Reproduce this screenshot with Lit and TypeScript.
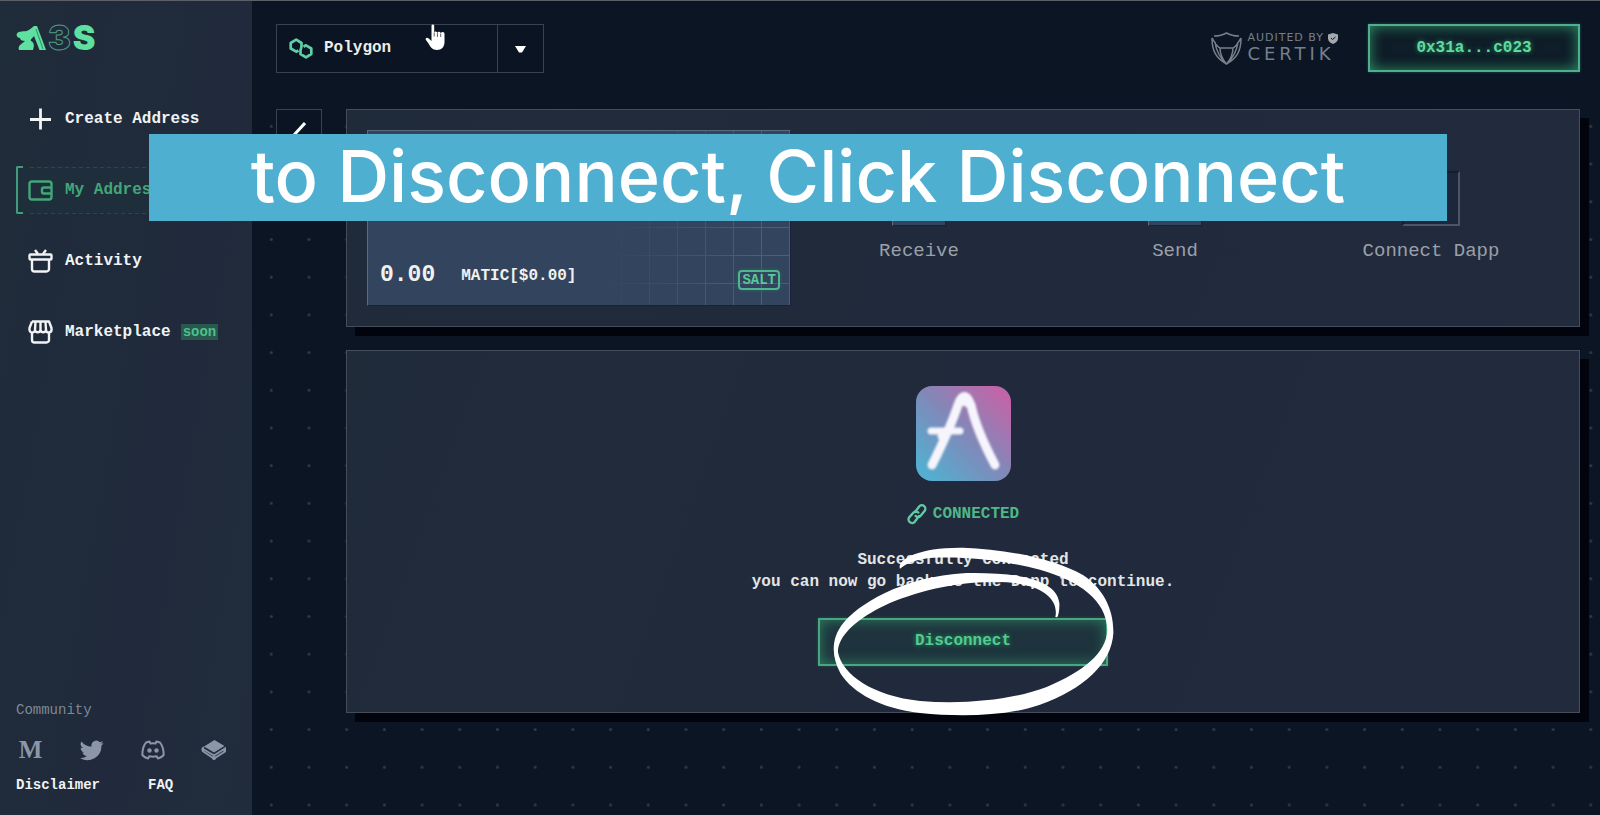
import { LitElement, html, css, svg } from "lit";
import { customElement, property } from "lit/decorators.js";
import { classMap } from "lit/directives/class-map.js";

const icons: Record<string, unknown> = {
  plus: svg`<path d="M12.500 1.500v21M2 12.500h21" stroke-width="2.800"/>`,
  wallet: svg`<rect x="1.500" y="3.500" width="22" height="18" rx="2.500"/><path d="M23.500 9.500H16a2 2 0 0 0-2 2v2a2 2 0 0 0 2 2h7.500"/>`,
  gift: svg`<rect x="1.500" y="5.500" width="22" height="5" rx="1"/><path d="M4 10.500V20a2.500 2.500 0 0 0 2.500 2.500h12A2.500 2.500 0 0 0 21 20v-9.500M7 1 10 5M18 1 15 5"/>`,
  store: svg`<path d="M4 1.500h17L23.500 8v1.500a2.700 2.700 0 0 1-5.500.5l-.5-8.500M18 10a2.800 2.800 0 0 1-5.500 0A2.800 2.800 0 0 1 7 10l.5-8.500M7 10A2.700 2.700 0 0 1 1.500 9.500V8L4 1.500M12.500 1.500V10M4 13v7a2.500 2.500 0 0 0 2.500 2.500h12A2.500 2.500 0 0 0 21 20v-7"/>`,
};

interface NavEntry {
  icon: string;
  label: string;
  tag?: string;
  active?: boolean;
}

const navEntries: NavEntry[] = [
  { icon: "plus", label: "Create Address" },
  { icon: "wallet", label: "My Address", active: true },
  { icon: "gift", label: "Activity" },
  { icon: "store", label: "Marketplace", tag: "soon" },
];

@customElement("side-bar")
export class SideBar extends LitElement {
  @property({ attribute: false }) entries: NavEntry[] = navEntries;

  static styles = css`
    :host {
      box-sizing: border-box;
      display: flex;
      flex-direction: column;
      padding: 22px 16px 21px;
      background: linear-gradient(100deg, #1f2c39, #202a3c 60%, #212c3b);
      color: #f1f3f4;
    }
    a { color: inherit; text-decoration: none; }
    .logo {
      display: flex;
      align-items: center;
      gap: 2px;
      height: 30px;
      font: 900 34px/30px Inter, sans-serif;
      color: #5fe0a0;
    }
    .mark { width: 30px; height: 26px; }
    .outline { color: transparent; -webkit-text-stroke: 1px #4f9a85; }
    nav { display: flex; flex-direction: column; gap: 23px; margin-top: 42px; }
    .item {
      position: relative;
      display: flex;
      align-items: center;
      gap: 12px;
      height: 48px;
      padding-left: 12px;
      font-weight: 700;
      white-space: nowrap;
    }
    .item svg {
      width: 25px;
      height: 25px;
      fill: none;
      stroke: currentColor;
      stroke-width: 2.4;
      stroke-linejoin: round;
    }
    .active {
      color: #43a679;
      background:
        repeating-linear-gradient(90deg, #2d4549 0 4px, transparent 4px 7px) 14px 1px / 100% 1px no-repeat,
        repeating-linear-gradient(90deg, #2d4549 0 4px, transparent 4px 7px) 14px 47px / 100% 1px no-repeat,
        #1d323c80;
    }
    .active::before {
      content: "";
      position: absolute;
      inset: 0 auto 0 0;
      width: 5px;
      border: 2px solid #3f9c7c;
      border-right: 0;
      border-radius: 2px 0 0 2px;
    }
    .tag {
      padding: 0 2px;
      margin-left: -2px;
      background: #29584f;
      color: #4cc08a;
      font-size: 14px;
      line-height: 16px;
    }
    footer { margin-top: auto; font-size: 14px; line-height: 18px; }
    .title { color: #7f8997; }
    .social {
      display: grid;
      grid-template-columns: repeat(4, 61px);
      align-items: center;
      height: 30px;
      margin: 16px 0 11px;
      color: #8b96a8;
    }
    .social a { display: flex; justify-content: center; width: 29px; }
    .social svg { width: 26px; height: 24px; fill: currentColor; }
    .social .medium { font: 700 25px/30px "Liberation Serif", serif; }
    .links { display: flex; gap: 48px; font-weight: 700; }
  `;

  render() {
    return html`
      <div class="logo" role="img" aria-label="A3S">
        <svg class="mark" viewBox="0 0 30 26" aria-hidden="true">
          <path d="M1 8.500C3 5.500 8 7 12 5.500c2-1 4-3 6-4.500h3l9 24h-6.500L18 11c-1 2-4 3-3 5 4 2 3 6 2 9H3c-1-2 0-4 1-5l5-4c-3 0-5-1-5-3-3 0-4-3-3-4.500z" fill="#5fe0a0" />
          <path d="M20 4l7 20" stroke="#2f8f66" fill="none" />
        </svg>
        <span class="outline">3</span><span>S</span>
      </div>
      <nav>
        ${this.entries.map(
          (e) => html`<a href="#" class=${classMap({ item: true, active: !!e.active })}>
            <svg viewBox="0 0 25 25" aria-hidden="true">${icons[e.icon]}</svg>
            <span>${e.label}</span>
            ${e.tag ? html`<span class="tag">${e.tag}</span>` : ""}
          </a>`
        )}
      </nav>
      <footer>
        <div class="title">Community</div>
        <div class="social">
          <a href="#" class="medium">M</a>
          <a href="#" aria-label="Twitter">
            <svg viewBox="0 0 24 24"><path d="M23.600 4.900a9.600 9.600 0 0 1-2.800.8 4.900 4.900 0 0 0 2.100-2.700 9.800 9.800 0 0 1-3.100 1.200 4.900 4.900 0 0 0-8.300 4.500A13.900 13.900 0 0 1 1.400 3.600a4.900 4.900 0 0 0 1.500 6.500 4.900 4.900 0 0 1-2.200-.6 4.900 4.900 0 0 0 3.900 4.900 5 5 0 0 1-2.200.1 4.900 4.900 0 0 0 4.600 3.400A9.900 9.900 0 0 1 0 19.900a13.900 13.900 0 0 0 21.400-12.400c.9-.7 1.600-1.600 2.200-2.600z" /></svg>
          </a>
          <a href="#" aria-label="Discord">
            <svg viewBox="0 0 24 24"><path fill="none" stroke="currentColor" stroke-width="2" stroke-linejoin="round" d="M8.500 3.500 5 4.500C3 7 1.300 11.500 1.300 17c1.500 1.800 3.500 3 5.700 3.500l1.300-2.300c2.500.6 4.900.6 7.400 0l1.300 2.300c2.200-.5 4.200-1.700 5.700-3.500 0-5.500-1.700-10-3.700-12.500l-3.500-1-1 2a16 16 0 0 0-5 0z" /><circle cx="8.500" cy="12.500" r="2.200" /><circle cx="15.500" cy="12.500" r="2.200" /></svg>
          </a>
          <a href="#" aria-label="GitBook">
            <svg viewBox="0 0 24 24"><path d="M12.500 2 22.500 8 12 14.500 2 8.500z" /><path fill="none" stroke="currentColor" stroke-width="1.900" d="M2 9C-.5 10.500 0 13 2 14l10 6.500 11-7v-3L12 17.500 1 11" /><circle cx="12" cy="20" r="2" /><circle cx="22.500" cy="12" r="1.500" /></svg>
          </a>
        </div>
        <div class="links"><a href="#">Disclaimer</a><a href="#">FAQ</a></div>
      </footer>
    `;
  }
}

@customElement("top-bar")
export class TopBar extends LitElement {
  static styles = css`
    :host { display: flex; align-items: flex-start; height: 49px; }
    .network {
      position: relative;
      box-sizing: border-box;
      display: flex;
      align-items: center;
      width: 268px;
      height: 49px;
      border: 1px solid #39424f;
      background: #0b1422;
    }
    .network svg { flex: none; }
    .poly { width: 24px; height: 21px; margin-left: 12px; fill: none; stroke: #5fcfa5; stroke-width: 2.7; stroke-linejoin: round; }
    select {
      flex: 1;
      align-self: stretch;
      min-width: 0;
      padding: 0 0 2px 11px;
      border: 0;
      background: none;
      color: #eceee9;
      font: 700 16px "Liberation Mono", monospace;
      appearance: none;
    }
    .caret {
      display: flex;
      align-items: center;
      justify-content: center;
      align-self: stretch;
      width: 46px;
      padding-top: 2px;
      box-sizing: border-box;
      border-left: 1px solid #39424f;
    }
    .caret svg { width: 11px; height: 7px; fill: #fff; }
    .cursor { position: absolute; left: 148px; top: -1px; width: 22px; height: 28px; }
    .audit {
      display: flex;
      align-items: center;
      gap: 5px;
      height: 48px;
      margin-left: auto;
      margin-right: 30px;
      color: #777f8a;
      font-family: "DejaVu Sans", sans-serif;
    }
    .shield { width: 31px; height: 33px; fill: none; stroke: currentColor; stroke-width: 1.5; }
    .by { display: flex; align-items: center; gap: 4px; font-size: 11px; line-height: 12px; letter-spacing: 1px; }
    .by svg { width: 10px; height: 11px; fill: #a3a8af; }
    .name { font-size: 18px; line-height: 20px; letter-spacing: 4px; }
    .wallet {
      width: 212px;
      height: 48px;
      padding: 0;
      border: 2px solid #4fae8d;
      background: #0e1d28;
      box-shadow: inset 0 0 14px #2f8f66, 0 0 3px #17553f;
      color: #5fdc9d;
      font: 700 16px "Liberation Mono", monospace;
      text-shadow: 0 0 5px #2b9a64;
    }
  `;

  render() {
    return html`
      <label class="network">
        <svg class="poly" viewBox="0 0 24 21" aria-hidden="true">
          <path d="M9.500 12.500 7.200 13.700 1.700 10.500V5L7.200 1.700 12.500 5v3.500L11.500 12.500V16L17 19.300 22.300 16V10.500L17 7.300 14.500 8.700" />
        </svg>
        <select aria-label="Network"><option>Polygon</option></select>
        <span class="caret"><svg viewBox="0 0 11 7"><path d="M0 0h11L7 6.500H4z" /></svg></span>
        <svg class="cursor" viewBox="0 0 22 28" aria-hidden="true">
          <path d="M6.500 1.500a1.400 1.400 0 0 1 2.700 0V8.500a1.700 1.700 0 0 1 3.200.4 1.700 1.700 0 0 1 3.300.6 1.700 1.700 0 0 1 3.800.8V18c0 5-3 8-7.500 8-5 0-6.500-3-8.500-6.500L.8 15.800c-.8-1.900 1.500-3 2.900-1.300L6.500 17z" fill="#fff" />
          <path d="M9.200 8.500v4M12.400 9V13M15.700 9.700V13" stroke="#59606b" stroke-width="1" />
        </svg>
      </label>
      <div class="audit">
        <svg class="shield" viewBox="0 0 31 33" aria-hidden="true">
          <path d="M3 4C8 4 12 3 15.500 1 19 3 23 4 28 4M1 6c0 13 4 20 14.500 26C26 26 30 19 30 6M1 6c3 5 5 9 8 10h13c3-1 5-5 8-10M9 16c0 7 3 12 6.500 16C19 28 22 23 22 16M4 10c1 8 5 16 11.500 22C22 26 26 18 27 10" />
        </svg>
        <div>
          <div class="by">AUDITED BY
            <svg viewBox="0 0 10 11"><path d="M5 0l5 1.500v4C10 8 8 10 5 11 2 10 0 8 0 5.500v-4z" /><path d="M3 5l1.500 1.500L7.500 4" stroke="#0b1524" fill="none" /></svg>
          </div>
          <div class="name">CERTIK</div>
        </div>
      </div>
      <button class="wallet">0x31a...c023</button>
    `;
  }
}

@customElement("address-panel")
export class AddressPanel extends LitElement {
  static styles = css`
    :host {
      display: grid;
      grid-template-columns: 424px repeat(3, 1fr);
      padding: 20px;
    }
    .card {
      box-sizing: border-box;
      display: flex;
      align-items: flex-end;
      height: 176px;
      padding: 0 10px 15px 12px;
      border: 1px solid #5d6b80;
      border-right-color: #17223a;
      border-bottom-color: #17223a;
      background:
        linear-gradient(100deg, #33445e 58%, transparent 90%),
        linear-gradient(90deg, #41647a 1px, transparent 1px) 1px 0 / 28px 28px,
        linear-gradient(#41647a 1px, transparent 1px) 0 12px / 28px 28px,
        #33445e;
      color: #f0f1ee;
      font-weight: 700;
    }
    .amount { font-size: 23px; line-height: 30px; }
    .unit { margin-left: 26px; line-height: 28px; }
    .badge {
      margin-left: auto;
      padding: 0 2px;
      border: 2px solid #4fb592;
      border-radius: 4px;
      color: #58c898;
      font-size: 14px;
      line-height: 16px;
      box-shadow: 0 0 4px #24695a;
    }
    .action {
      display: flex;
      flex-direction: column;
      align-items: center;
      gap: 13px;
      padding: 41px 0 0;
      border: 0;
      background: none;
      color: #9ba0a8;
      font: 19px/24px "Liberation Mono", monospace;
    }
    .tile {
      box-sizing: border-box;
      width: 54px;
      height: 55px;
      border: 1px solid #5d6b80;
      border-right-color: #17223a;
      border-bottom-color: #17223a;
      background: #33445e;
    }
    .pressed {
      width: 58px;
      border: 2px solid #4c5666;
      border-top-color: #131d30;
      border-left-color: #131d30;
      background: #1c273b;
    }
  `;

  render() {
    return html`
      <div class="card">
        <span class="amount">0.00</span>
        <span class="unit">MATIC[$0.00]</span>
        <span class="badge">SALT</span>
      </div>
      ${["Receive", "Send", "Connect Dapp"].map(
        (label) => html`<button class="action">
          <span class=${classMap({ tile: true, pressed: label === "Connect Dapp" })}></span>${label}
        </button>`
      )}
    `;
  }
}

@customElement("dapp-panel")
export class DappPanel extends LitElement {
  static styles = css`
    :host {
      display: flex;
      flex-direction: column;
      align-items: center;
      padding: 35px 20px 46px;
      color: #e3e5e4;
      font-weight: 700;
    }
    .app { width: 95px; height: 95px; }
    .status {
      display: flex;
      align-items: center;
      gap: 6px;
      margin-top: 22px;
      height: 22px;
      color: #4fb886;
    }
    .status svg { width: 20px; height: 22px; fill: none; stroke: #63c9a4; stroke-width: 2.4; stroke-linecap: round; }
    p { margin: 24px 0 25px; line-height: 22px; text-align: center; }
    .action { position: relative; }
    button {
      width: 290px;
      height: 48px;
      padding: 0 0 2px;
      border: 2px solid #4aa583;
      background: #1e333d;
      box-shadow: inset 0 0 14px #2c8060, 0 0 3px #1d5a49;
      color: #52cc90;
      font: 700 16px "Liberation Mono", monospace;
      text-shadow: 0 0 5px #2b9a64;
    }
    .scribble { position: absolute; left: 12px; top: -75px; width: 287px; height: 174px; pointer-events: none; }
  `;

  render() {
    return html`
      <svg class="app" viewBox="0 0 95 95" role="img" aria-label="Aave">
        <defs>
          <linearGradient id="fill" x1="0.100" y1="0.900" x2="0.900" y2="0.100">
            <stop offset="0" stop-color="#55adcf" />
            <stop offset="0.500" stop-color="#8089b9" />
            <stop offset="1" stop-color="#c066a8" />
          </linearGradient>
          <filter id="soft" x="-10%" y="-10%" width="120%" height="120%"><feGaussianBlur stdDeviation="1.300" /></filter>
        </defs>
        <rect width="95" height="95" rx="16" fill="url(#fill)" />
        <g fill="none" stroke="#f6f4fc" stroke-linecap="round" stroke-linejoin="round" filter="url(#soft)">
          <path d="M16 79C23 65 34 43 42 19Q48 2 55 19C59 38 69 60 79 79" stroke-width="9" />
          <path d="M45 15Q49 8 52 16" stroke-width="11" />
          <path d="M15 45H44" stroke-width="7" />
          <path d="M26 50L31 46" stroke-width="9" />
        </g>
      </svg>
      <div class="status">
        <svg viewBox="0 0 20 22" aria-hidden="true">
          <path d="M8 9 12.200 3.500a3.500 3.500 0 0 1 5.300 4.600L13.500 13a3.500 3.500 0 0 1-4.800 0M12 13 7.800 18.700a3.500 3.500 0 0 1-5.400-4.600L6.500 9.500a3.500 3.500 0 0 1 4.800 0" />
        </svg>
        CONNECTED
      </div>
      <p>Successfully connected<br />you can now go back to the Dapp to continue.</p>
      <div class="action">
        <button>Disconnect</button>
        <svg class="scribble" viewBox="330 40 861 522" aria-hidden="true">
          <path fill="#fff" d="M540 117C530 92 590 52 730 54 850 58 1000 85 1090 137 1150 178 1182 240 1180 310 1176 400 1090 480 960 525 860 560 720 562 600 550 480 535 400 490 362 432 333 380 333 325 370 280 410 230 540 140 740 130 880 128 1010 145 1018 220 1019 240 1016 255 1012 263L1006 262C1018 205 960 165 860 158 700 150 560 195 480 234 400 275 352 325 354 368 366 435 460 500 600 514 740 525 880 510 980 472 1090 425 1160 370 1162 300 1158 210 1080 155 960 120 850 92 740 80 640 84 590 88 560 100 540 117z" />
        </svg>
      </div>
    `;
  }
}

@customElement("app-root")
export class AppRoot extends LitElement {
  static styles = css`
    :host {
      position: relative;
      box-sizing: border-box;
      display: grid;
      grid-template-columns: 252px 1fr;
      min-height: 100vh;
      border-top: 1px solid #5b5f66;
      background: #0b1524;
      font: 16px/20px "Liberation Mono", monospace;
    }
    main { position: relative; padding: 23px 20px 40px 24px; }
    .dots { position: absolute; inset: 106px 0 0 0; width: 100%; height: calc(100% - 106px); }
    top-bar { position: relative; }
    .content {
      position: relative;
      display: grid;
      grid-template-columns: 46px 1fr;
      align-items: start;
      gap: 24px;
      margin-top: 36px;
    }
    .back {
      display: flex;
      align-items: center;
      justify-content: center;
      height: 48px;
      padding: 0;
      border: 1px solid #39424f;
      background: #0b1422;
    }
    .back svg { width: 14px; height: 22px; fill: none; stroke: #fff; stroke-width: 3; }
    .panels { display: flex; flex-direction: column; gap: 23px; }
    .panel {
      border: 1px solid #454d5a;
      background: linear-gradient(110deg, #202b3a, #202a3c 50%, #212b3c);
      box-shadow: 9px 9px 0 #02040d;
    }
    .caption {
      position: absolute;
      left: 149px;
      right: 153px;
      top: 133px;
      height: 87px;
      background: #4fafd0;
      color: #fff;
      font: 500 72px/84px Inter, sans-serif;
      text-align: center;
      white-space: nowrap;
    }
  `;

  render() {
    return html`
      <side-bar></side-bar>
      <main>
        <svg class="dots" aria-hidden="true">
          <defs>
            <pattern id="grid" width="37.700" height="37.700" patternUnits="userSpaceOnUse">
              <circle cx="19.300" cy="19.300" r="1.500" fill="#2f3a49" />
            </pattern>
          </defs>
          <rect width="100%" height="100%" fill="url(#grid)" />
        </svg>
        <top-bar></top-bar>
        <div class="content">
          <button class="back" aria-label="Back">
            <svg viewBox="0 0 14 22"><path d="M13 1 2 13 11 22" /></svg>
          </button>
          <div class="panels">
            <address-panel class="panel"></address-panel>
            <dapp-panel class="panel"></dapp-panel>
          </div>
        </div>
      </main>
      <div class="caption">to Disconnect, Click Disconnect</div>
    `;
  }
}
